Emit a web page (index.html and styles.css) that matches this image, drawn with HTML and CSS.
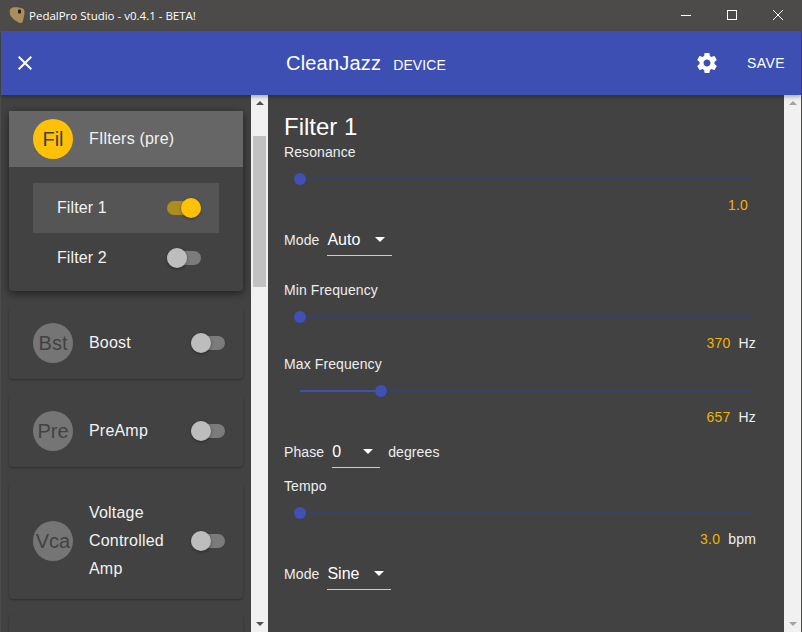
FILE: index.html
```html
<!DOCTYPE html>
<html lang="en">
<head>
  <meta charset="UTF-8" />
  <title>PedalPro Studio - v0.4.1 - BETA!</title>
  <link rel="stylesheet" href="styles.css">
</head>
<body>
  <div class="window">
    <div class="titlebar">
      <svg class="pick" width="16" height="17" viewBox="0 0 16 17">
        <path d="M3 .7C6 -.1 12 .5 14.500 2C16 3.500 15.500 6.500 15 9C14.500 12 14 15 12.500 16C10 16.500 5 13 2.500 10C.5 7.500 -.5 2 3 .7Z" fill="#ae8d5c"/>
        <rect x="9" y="2.500" width="3" height="4" rx="1" fill="#1c1c1c"/>
      </svg>
      <span class="title-text">PedalPro Studio - v0.4.1 - BETA!</span>
      <div class="win-buttons">
        <svg width="46" height="31" viewBox="0 0 46 31"><rect x="18" y="15" width="10" height="1" fill="#fff"/></svg>
        <svg width="46" height="31" viewBox="0 0 46 31"><rect x="18.500" y="10.500" width="9" height="9" fill="none" stroke="#fff"/></svg>
        <svg width="46" height="31" viewBox="0 0 46 31"><path d="M18 10l10 10M28 10l-10 10" stroke="#fff" fill="none"/></svg>
      </div>
    </div>

    <div class="appbar">
      <svg class="close-icon" width="24" height="24" viewBox="0 0 24 24"><path fill="#fff" d="M19 6.410L17.590 5 12 10.590 6.410 5 5 6.410 10.590 12 5 17.590 6.410 19 12 13.410 17.590 19 19 17.590 13.410 12z"/></svg>
      <div class="appbar-title">
        <span class="preset-name">CleanJazz</span>
        <span class="preset-source">DEVICE</span>
      </div>
      <svg class="gear-icon" width="24" height="24" viewBox="0 0 24 24"><path fill="#fff" d="M19.430 12.980c.04-.32.07-.64.07-.98s-.03-.66-.07-.98l2.110-1.650c.19-.15.24-.42.12-.64l-2-3.460c-.12-.22-.39-.3-.61-.22l-2.490 1c-.52-.4-1.080-.73-1.690-.98l-.38-2.650C14.460 2.180 14.250 2 14 2h-4c-.25 0-.46.18-.49.420l-.38 2.650c-.61.25-1.170.59-1.690.98l-2.490-1c-.23-.09-.49 0-.61.22l-2 3.460c-.13.220-.07.490.12.640l2.110 1.650c-.04.320-.07.650-.07.980s.03.660.07.980l-2.110 1.650c-.19.150-.24.420-.12.640l2 3.460c.12.220.39.300.61.220l2.490-1c.52.400 1.080.730 1.690.980l.38 2.650c.03.240.24.420.49.420h4c.25 0 .46-.18.49-.42l.38-2.650c.61-.25 1.170-.59 1.690-.98l2.490 1c.23.090.49 0 .61-.22l2-3.460c.12-.22.07-.49-.12-.64l-2.110-1.650zM12 15.500c-1.930 0-3.500-1.570-3.500-3.500s1.570-3.500 3.500-3.500 3.500 1.570 3.500 3.500-1.570 3.500-3.500 3.500z"/></svg>
      <span class="save">SAVE</span>
    </div>

    <div class="content">
      <div class="effects">
        <div class="card card-open">
          <div class="card-head card-head-active">
            <div class="avatar avatar-on">Fil</div>
            <div class="card-name">FIlters (pre)</div>
          </div>
          <div class="sub-list">
            <div class="sub-item sub-item-active">
              <span>Filter 1</span>
              <div class="switch switch-on"><i></i></div>
            </div>
            <div class="sub-item">
              <span>Filter 2</span>
              <div class="switch"><i></i></div>
            </div>
          </div>
        </div>

        <div class="card card-row">
          <div class="avatar">Bst</div>
          <div class="card-name">Boost</div>
          <div class="switch"><i></i></div>
        </div>

        <div class="card card-row">
          <div class="avatar">Pre</div>
          <div class="card-name">PreAmp</div>
          <div class="switch"><i></i></div>
        </div>

        <div class="card card-row card-tall">
          <div class="avatar">Vca</div>
          <div class="card-name">Voltage Controlled Amp</div>
          <div class="switch"><i></i></div>
        </div>

        <div class="card card-row card-cut"></div>
      </div>

      <div class="scrollbar">
        <span class="arrow-up"></span>
        <div class="track"><div class="thumb"></div></div>
        <span class="arrow-down"></span>
      </div>

      <div class="editor">
        <h2>Filter 1</h2>

        <div class="label label-first">Resonance</div>
        <div class="slider"><div class="knob" style="left: 0px"></div></div>
        <div class="value value-short"><b>1.0</b></div>
        <div class="select-row">
          <span class="label">Mode</span>
          <div class="select select-auto"><span>Auto</span><i class="caret"></i></div>
        </div>

        <div class="label label-min">Min Frequency</div>
        <div class="slider"><div class="knob" style="left: 0px"></div></div>
        <div class="value"><b>370</b><span>Hz</span></div>

        <div class="label label-max">Max Frequency</div>
        <div class="slider"><div class="fill" style="width: 81px"></div><div class="knob" style="left: 81px"></div></div>
        <div class="value"><b>657</b><span>Hz</span></div>
        <div class="select-row">
          <span class="label">Phase</span>
          <div class="select select-phase"><span>0</span><i class="caret"></i></div>
          <span class="label">degrees</span>
        </div>

        <div class="label label-tempo">Tempo</div>
        <div class="slider"><div class="knob" style="left: 0px"></div></div>
        <div class="value"><b>3.0</b><span>bpm</span></div>
        <div class="select-row">
          <span class="label">Mode</span>
          <div class="select select-sine"><span>Sine</span><i class="caret"></i></div>
        </div>
      </div>

      <div class="scrollbar scrollbar-idle">
        <span class="arrow-up"></span>
        <div class="track"></div>
        <span class="arrow-down"></span>
      </div>
    </div>
  </div>
</body>
</html>
```

FILE: styles.css
```css
* { box-sizing: border-box; }
html, body { margin: 0; height: 100%; }
body { font-family: "Liberation Sans", Arial, sans-serif; background: #424242; color: #fff; overflow: hidden; }

.window { width: 802px; height: 632px; display: flex; flex-direction: column; border: 1px solid #4c4b49; border-top: 0; border-bottom: 0; }

.titlebar { height: 31px; flex: none; background: #4c4b49; display: flex; align-items: center; padding: 0 1px 0 9px; margin: 0 -1px; }
.pick { margin-right: 4px; }
.title-text { font-family: "Open Sans", sans-serif; font-size: 11.500px; }
.win-buttons { margin-left: auto; display: flex; }
.win-buttons svg { display: block; }

.appbar { height: 64px; flex: none; background: #3d4fb2; display: flex; align-items: center; position: relative; box-shadow: 0 2px 4px rgba(0,0,0,.3); z-index: 2; }
.close-icon { margin-left: 12px; }
.appbar-title { position: absolute; left: 285px; display: flex; align-items: baseline; }
.preset-name { font-size: 20px; letter-spacing: .2px; }
.preset-source { font-size: 14px; margin-left: 12px; letter-spacing: .1px; }
.gear-icon { margin-left: auto; margin-right: 28px; }
.save { font-size: 14px; margin-right: 16px; letter-spacing: .4px; }

.content { flex: 1; display: flex; min-height: 0; }

.effects { width: 250px; flex: none; padding: 16px 8px 0; overflow: hidden; }
.card { width: 234px; background: #424242; border-radius: 4px; margin-bottom: 16px; box-shadow: 0 1px 2px rgba(0,0,0,.3); }
.card-open { height: 180px; box-shadow: 0 2px 8px rgba(0,0,0,.55); }
.card-head { height: 56px; display: flex; align-items: center; padding-left: 24px; }
.card-head-active { background: #666; }
.card-head .card-name { width: auto; }
.sub-list { padding: 16px 24px 0; }
.sub-item { height: 50px; display: flex; align-items: center; justify-content: space-between; padding: 0 18px 0 24px; font-size: 16px; color: #f2f2f2; letter-spacing: .1px; }
.sub-item-active { background: #555; }

.card-row { display: flex; align-items: center; height: 72px; padding-left: 24px; }
.card-tall { height: 116px; }
.card-cut { height: 40px; margin: 0; }
.card-name { font-size: 16px; line-height: 28px; color: #f2f2f2; margin-left: 16px; width: 102px; letter-spacing: .2px; }
.avatar { width: 40px; height: 40px; border-radius: 50%; background: #757575; color: #424242; font-size: 20px; display: flex; align-items: center; justify-content: center; flex: none; }
.avatar-on { background: #ffc107; }

.switch { width: 34px; height: 14px; border-radius: 7px; background: #7b7b7b; position: relative; flex: none; }
.switch i { position: absolute; left: 0; top: -3px; width: 20px; height: 20px; border-radius: 50%; background: #bdbdbd; box-shadow: 0 1px 3px rgba(0,0,0,.4); }
.switch-on { background: #ad8d20; }
.switch-on i { left: 14px; background: #ffc107; }

.scrollbar { width: 17px; flex: none; background: #f1f1f1; display: flex; flex-direction: column; align-items: center; }
.arrow-up, .arrow-down { flex: none; width: 0; height: 0; margin: 6px 0; border-left: 4px solid transparent; border-right: 4px solid transparent; }
.arrow-up { border-bottom: 4px solid #505050; }
.arrow-down { border-top: 4px solid #505050; }
.scrollbar-idle .arrow-up { border-bottom-color: #a3a3a3; }
.scrollbar-idle .arrow-down { border-top-color: #a3a3a3; }
.track { flex: 1; width: 100%; padding: 25px 2px 0; }
.thumb { height: 151px; background: #c1c1c1; }

.editor { flex: 1; padding: 16px 28px 0 16px; font-size: 14px; }
.editor h2 { margin: 0; font-size: 24px; font-weight: 400; line-height: 32px; }
.label { font-size: 14px; line-height: 20px; color: #eee; letter-spacing: .1px; }
.label-first { margin-top: -1px; }
.label-min { margin-top: 24px; }
.label-max { margin-top: 1px; }
.label-tempo { margin-top: 8px; }
.slider { position: relative; height: 2px; margin: 16px 0 0 16px; width: 452px; background: #3a4169; }
.fill { position: absolute; left: 0; top: 0; height: 2px; background: #3f51b5; }
.knob { position: absolute; top: -5px; width: 12px; height: 12px; margin-left: -6px; border-radius: 50%; background: #3f51b5; }
.value { display: flex; justify-content: flex-end; gap: 8px; font-size: 14px; line-height: 20px; margin-top: 15px; color: #eee; letter-spacing: .2px; }
.value b { font-weight: 400; color: #f0b400; }
.value-short { padding-right: 8px; }
.select-row { display: flex; align-items: center; height: 32px; margin-top: 9px; gap: 8px; }
.select { height: 32px; border-bottom: 1px solid #ccc; display: flex; align-items: center; font-size: 16px; position: relative; }
.select-auto { width: 65px; }
.select-sine { width: 64px; }
.select-phase { width: 48px; }
.caret { position: absolute; right: 7px; top: 13px; width: 0; height: 0; border-left: 5px solid transparent; border-right: 5px solid transparent; border-top: 5px solid #fff; }
```
